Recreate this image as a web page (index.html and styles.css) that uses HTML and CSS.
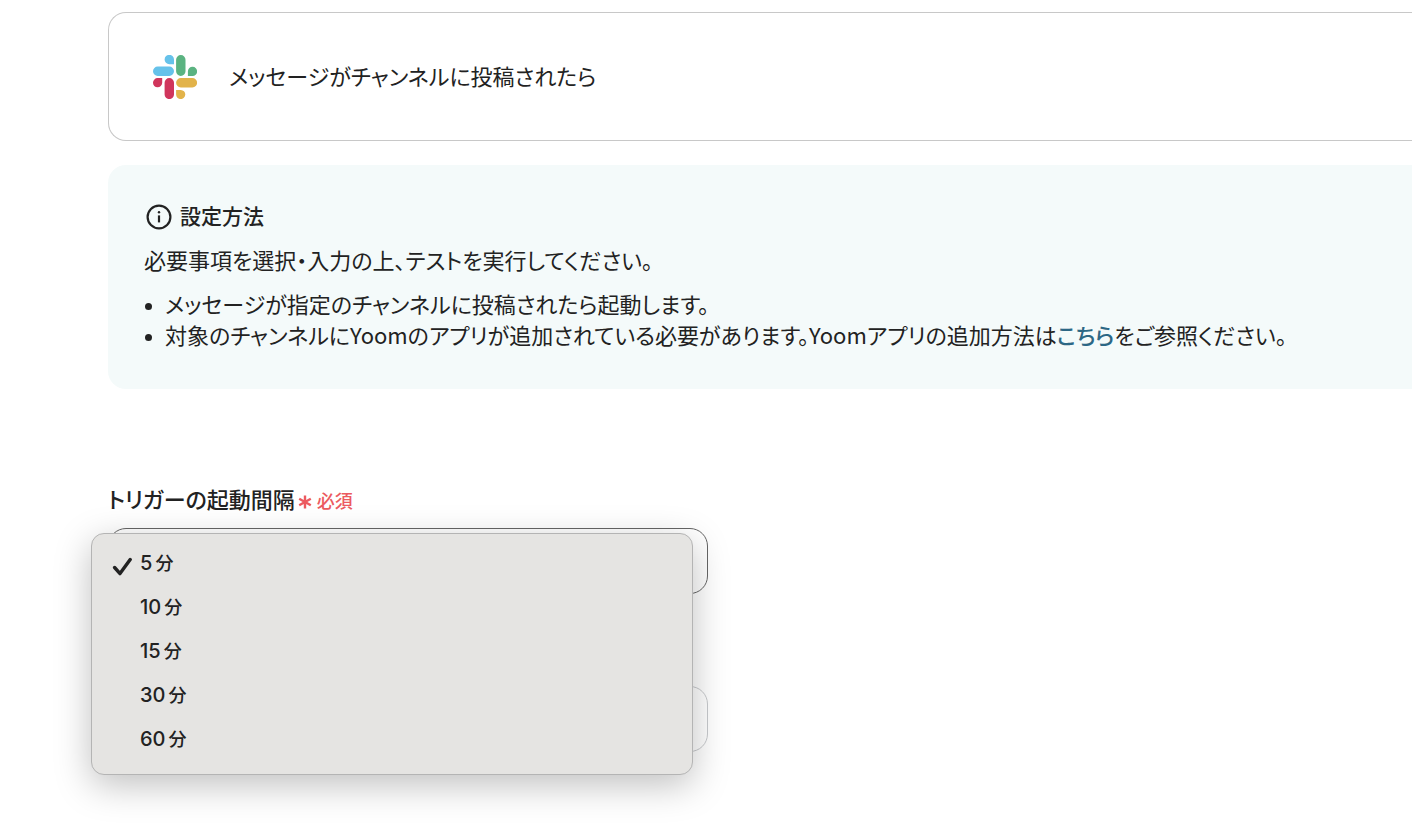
FILE: index.html
```html
<!DOCTYPE html>
<html lang="ja">
<head>
    <meta charset="UTF-8">
    <title>トリガー設定</title>
    <link rel="stylesheet" href="styles.css">
</head>
<body>
    <main class="page">
        <div class="app-card">
            <svg class="app-logo" viewBox="0 0 44 44" aria-hidden="true">
                <path fill="#66c2ea" d="M21 9.2V4.7A4.7 4.7 0 1 0 16.3 9.2ZM4.7 11.6H16.3A4.7 4.7 0 0 1 16.3 21H4.7A4.7 4.7 0 0 1 4.7 11.6Z"/>
                <path fill="#5bb381" d="M34.9 21V16.3A4.6 4.6 0 1 1 39.4 21ZM32.5 4.7V16.3A4.7 4.7 0 0 1 23.1 16.3V4.7A4.7 4.7 0 0 1 32.5 4.7Z"/>
                <path fill="#e2b34a" d="M23.1 34.9H27.8A4.6 4.6 0 1 1 23.1 39.4ZM27.8 23.1H39.4A4.7 4.7 0 0 1 39.4 32.5H27.8A4.7 4.7 0 0 1 27.8 23.1Z"/>
                <path fill="#d0355c" d="M9.2 23.1V27.8A4.6 4.6 0 1 1 4.7 23.1ZM11.6 27.8A4.7 4.7 0 0 1 21 27.8V39.4A4.7 4.7 0 0 1 11.6 39.4Z"/>
            </svg>
            <span class="app-name">メッセージがチャンネルに投稿されたら</span>
        </div>

        <section class="guide">
            <h2 class="guide-title">
                <svg class="info-icon" viewBox="0 0 26 26" aria-hidden="true">
                    <circle cx="13" cy="13" r="11.4" fill="none" stroke="#222" stroke-width="2.2"/>
                    <circle cx="13" cy="8.2" r="1.2" fill="#222"/>
                    <path d="M13 11.4V18.4" stroke="#222" stroke-width="2.2"/>
                </svg>
                設定方法
            </h2>
            <p>必要事項を選択・入力の上、テストを実行してください。</p>
            <ul>
                <li>メッセージが指定のチャンネルに投稿されたら起動します。</li>
                <li>対象のチャンネルにYoomのアプリが追加されている必要があります。Yoomアプリの追加方法は<a href="#">こちら</a>をご参照ください。</li>
            </ul>
        </section>

        <form class="form">
            <div class="form-group">
                <label for="interval">トリガーの起動間隔<span class="required"><svg class="required-mark" viewBox="0 0 14 14" aria-hidden="true"><path d="M7 0.5V13.5M1.2 3.7L12.8 10.3M12.8 3.7L1.2 10.3" stroke="#ec5a60" stroke-width="2.4"/></svg>必須</span></label>
                <select id="interval" class="active">
                    <option value="5">5分</option>
                    <option value="10">10分</option>
                    <option value="15">15分</option>
                    <option value="30">30分</option>
                    <option value="60">60分</option>
                </select>
                <div class="menu" role="listbox" aria-labelledby="interval">
                    <button type="button" class="menu-item" role="option" aria-selected="true">
                        <svg class="check" viewBox="0 0 20 20" aria-hidden="true"><path d="M2.6 11.5L8 17.6L18.2 3.6" fill="none" stroke="#222" stroke-width="3.4" stroke-linecap="round" stroke-linejoin="round"/></svg>
                        <span class="menu-text">5<span class="unit">分</span></span>
                    </button>
                    <button type="button" class="menu-item" role="option"><span class="menu-text">10<span class="unit">分</span></span></button>
                    <button type="button" class="menu-item" role="option"><span class="menu-text">15<span class="unit">分</span></span></button>
                    <button type="button" class="menu-item" role="option"><span class="menu-text">30<span class="unit">分</span></span></button>
                    <button type="button" class="menu-item" role="option"><span class="menu-text">60<span class="unit">分</span></span></button>
                </div>
            </div>
            <div class="form-group">
                <input type="text" aria-label="チャンネル">
            </div>
        </form>
    </main>
</body>
</html>
```
FILE: styles.css
```css
* {
    box-sizing: border-box;
}

body {
    margin: 0;
    font-family: "Noto Sans CJK JP", sans-serif;
    font-size: 22px;
    line-height: 31px;
    font-feature-settings: "palt";
    color: #222;
    background: #fff;
}

.page {
    padding: 12px 0 72px 108px;
}

.app-card {
    display: flex;
    align-items: center;
    gap: 32px;
    padding: 42px 44px 41px;
    border: 1px solid #c8c8c8;
    border-right: none;
    border-radius: 18px 0 0 18px;
}

.app-logo {
    width: 44px;
    height: 44px;
}

.app-name {
    padding-bottom: 4px;
}

.guide {
    margin-top: 24px;
    padding: 35px 36px 39px;
    border-radius: 18px 0 0 18px;
    background: #f4fafa;
}

.guide-title {
    display: flex;
    align-items: center;
    gap: 8px;
    margin: 0;
    padding-left: 2px;
    font-size: 21px;
    font-weight: 500;
}

.info-icon {
    width: 26px;
    height: 26px;
    margin-top: 2px;
}

.guide p {
    margin: 13px 0;
}

.guide ul {
    margin: 0;
    padding-left: 21px;
    list-style: none;
}

.guide li::before {
    content: "";
    display: inline-block;
    width: 7px;
    height: 7px;
    margin: 0 13px 1px -20px;
    border-radius: 50%;
    background: #222;
    vertical-align: middle;
}

.guide a {
    color: #2c6785;
    font-weight: 500;
    text-decoration: none;
}

.form {
    display: flex;
    flex-direction: column;
    gap: 92px;
    max-width: 600px;
    margin-top: 94px;
}

.form-group {
    position: relative;
}

.form-group label {
    display: flex;
    align-items: center;
    gap: 3px;
    margin-bottom: 14px;
    font-weight: 500;
}

.required {
    display: flex;
    align-items: center;
    gap: 5px;
    padding-top: 4px;
    font-size: 18px;
    line-height: 27px;
    color: #ec5a60;
}

.required-mark {
    width: 14px;
    height: 14px;
    margin-top: 2px;
}

.form-group select,
.form-group input {
    display: block;
    width: 100%;
    height: 66px;
    padding: 0 24px;
    border: 1px solid #c8cacd;
    border-radius: 18px;
    background: #fff;
    font: inherit;
    color: inherit;
    appearance: none;
}

.form-group select.active {
    border-color: #666;
}

.menu {
    position: absolute;
    z-index: 1;
    top: 50px;
    left: -17px;
    width: calc(100% + 2px);
    padding: 8px 0 12px;
    border: 1px solid #b4b4b4;
    border-radius: 13px;
    background: #e5e4e2;
    box-shadow: 0 10px 36px rgba(0, 0, 0, 0.25);
}

.menu-item {
    display: grid;
    grid-template-columns: 20px 1fr;
    align-items: center;
    column-gap: 8px;
    width: 100%;
    height: 44px;
    padding: 0 20px;
    border: none;
    background: none;
    font-family: Inter, "Noto Sans CJK JP", sans-serif;
    font-size: 20px;
    font-weight: 500;
    text-align: left;
    color: #222;
}

.menu-text {
    grid-column: 2;
    padding-bottom: 4px;
}

.check {
    width: 20px;
    height: 20px;
    margin-top: 4px;
}

.unit {
    margin-left: 3px;
    font-size: 18px;
}
```
